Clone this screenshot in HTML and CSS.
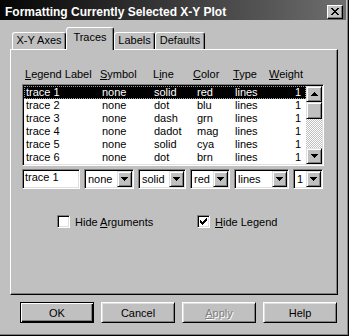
FILE: index.html
```html
<!DOCTYPE html>
<html lang="en">
<head>
  <meta charset="UTF-8">
  <title>Formatting Currently Selected X-Y Plot</title>
  <link rel="stylesheet" href="styles.css">
</head>
<body>
  <div class="window">
    <div class="titlebar">
      <span class="title">Formatting Currently Selected X-Y Plot</span>
      <span class="close">
        <svg width="8" height="7" viewBox="0 0 8 7"><path d="M0 0h2v1H0zM6 0h2v1H6zM1 1h2v1H1zM5 1h2v1H5zM2 2h4v1H2zM3 3h2v1H3zM2 4h4v1H2zM1 5h2v1H1zM5 5h2v1H5zM0 6h2v1H0zM6 6h2v1H6z"/></svg>
      </span>
    </div>

    <div class="tabs">
      <div class="tab tab-axes">X-Y Axes</div>
      <div class="tab tab-traces active">Traces</div>
      <div class="tab tab-labels">Labels</div>
      <div class="tab tab-defaults">Defaults</div>
    </div>

    <div class="panel">
      <div class="headers">
        <span><u>L</u>egend Label</span>
        <span><u>S</u>ymbol</span>
        <span>L<u>i</u>ne</span>
        <span><u>C</u>olor</span>
        <span><u>T</u>ype</span>
        <span><u>W</u>eight</span>
      </div>

      <div class="listbox field">
        <div class="rows">
          <div class="row selected"><span>trace 1</span><span>none</span><span>solid</span><span>red</span><span>lines</span><span class="num">1</span></div>
          <div class="row"><span>trace 2</span><span>none</span><span>dot</span><span>blu</span><span>lines</span><span class="num">1</span></div>
          <div class="row"><span>trace 3</span><span>none</span><span>dash</span><span>grn</span><span>lines</span><span class="num">1</span></div>
          <div class="row"><span>trace 4</span><span>none</span><span>dadot</span><span>mag</span><span>lines</span><span class="num">1</span></div>
          <div class="row"><span>trace 5</span><span>none</span><span>solid</span><span>cya</span><span>lines</span><span class="num">1</span></div>
          <div class="row"><span>trace 6</span><span>none</span><span>dot</span><span>brn</span><span>lines</span><span class="num">1</span></div>
        </div>
        <div class="scrollbar">
          <div class="sb-btn">
            <svg width="7" height="4" viewBox="0 0 7 4"><path d="M3 0h1v1h1v1h1v1h1v1H0V3h1V2h1V1h1z"/></svg>
          </div>
          <div class="thumb"></div>
          <div class="track"></div>
          <div class="sb-btn">
            <svg width="7" height="4" viewBox="0 0 7 4"><path d="M0 0h7v1H6v1H5v1H4v1H3V3H2V2H1V1H0z"/></svg>
          </div>
        </div>
      </div>

      <div class="editrow">
        <div class="field textbox">trace 1</div>
        <div class="field combo w-symbol"><span>none</span><span class="drop"><svg width="7" height="4" viewBox="0 0 7 4"><path d="M0 0h7v1H6v1H5v1H4v1H3V3H2V2H1V1H0z"/></svg></span></div>
        <div class="field combo w-line"><span>solid</span><span class="drop"><svg width="7" height="4" viewBox="0 0 7 4"><path d="M0 0h7v1H6v1H5v1H4v1H3V3H2V2H1V1H0z"/></svg></span></div>
        <div class="field combo w-color"><span>red</span><span class="drop"><svg width="7" height="4" viewBox="0 0 7 4"><path d="M0 0h7v1H6v1H5v1H4v1H3V3H2V2H1V1H0z"/></svg></span></div>
        <div class="field combo w-type"><span>lines</span><span class="drop"><svg width="7" height="4" viewBox="0 0 7 4"><path d="M0 0h7v1H6v1H5v1H4v1H3V3H2V2H1V1H0z"/></svg></span></div>
        <div class="field combo w-weight"><span>1</span><span class="drop"><svg width="7" height="4" viewBox="0 0 7 4"><path d="M0 0h7v1H6v1H5v1H4v1H3V3H2V2H1V1H0z"/></svg></span></div>
      </div>

      <div class="checks">
        <div class="check">
          <span class="field box"></span>
          <span>Hide <u>A</u>rguments</span>
        </div>
        <div class="check">
          <span class="field box">
            <svg width="7" height="7" viewBox="0 0 7 7"><path d="M6 0h1v3H6zM5 1h1v3H5zM4 2h1v3H4zM0 2h1v3H0zM1 3h1v3H1zM3 3h1v3H3zM2 4h1v3H2z"/></svg>
          </span>
          <span><u>H</u>ide Legend</span>
        </div>
      </div>
    </div>

    <div class="buttons">
      <div class="btn default">OK</div>
      <div class="btn">Cancel</div>
      <div class="btn disabled"><u>A</u>pply</div>
      <div class="btn">Help</div>
    </div>
  </div>
</body>
</html>
```

FILE: styles.css
```css
* { box-sizing: border-box; }

body {
  margin: 0;
  background-color: #c0c0c0;
  color: #000;
  font-family: 'Liberation Sans', Arial, sans-serif;
  font-size: 11px;
}

.window {
  width: 349px;
  height: 336px;
  background-color: #c0c0c0;
  border-right: 1px solid #000;
  border-bottom: 1px solid #000;
  box-shadow: inset -1px -1px #808080;
  padding: 0 2px 2px 0;
}

/* Title bar */
.titlebar {
  height: 20px;
  padding: 3px 3px 0 5px;
  display: flex;
  align-items: center;
  background: linear-gradient(to right, #050505, #6e6e6e);
  color: #fff;
  font-weight: bold;
  font-size: 12px;
}

.close {
  margin-left: auto;
  width: 16px;
  height: 14px;
  background-color: #c0c0c0;
  border: 1px solid;
  border-color: #fff #000 #000 #fff;
  box-shadow: inset -1px -1px #808080;
  display: flex;
  align-items: center;
  justify-content: center;
}

/* Tabs */
.tabs {
  display: flex;
  align-items: flex-end;
  height: 22px;
  margin-top: 7px;
  padding-left: 12px;
}

.tab {
  height: 17px;
  padding-top: 1px;
  line-height: 13px;
  text-align: center;
  border: 1px solid;
  border-bottom: none;
  border-color: #fff #000 transparent #fff;
  border-radius: 3px 3px 0 0;
  box-shadow: inset -1px 0 #808080;
}

.tab.active {
  position: relative;
  z-index: 1;
  height: 23px;
  margin-bottom: -1px;
  padding-top: 3px;
  background-color: #c0c0c0;
}

.tab-axes { width: 54px; }
.tab-traces { width: 48px; }
.tab-labels { width: 41px; }
.tab-defaults { width: 50px; }

/* Panel */
.panel {
  margin-left: 10px;
  width: 328px;
  height: 246px;
  border: 1px solid;
  border-color: #fff #000 #000 #fff;
  box-shadow: inset -1px -1px #808080;
  padding: 18px 0 0 11px;
}

.headers {
  display: grid;
  grid-template-columns: 75px 53px 40px 40px 36px auto;
  height: 13px;
  line-height: 13px;
  padding-left: 3px;
  margin-bottom: 3px;
}

.field {
  border: 1px solid;
  border-color: #808080 #fff #fff #808080;
  box-shadow: inset 1px 1px #000, inset -1px -1px #dfdfdf;
  padding: 1px;
  background-color: #fff;
}

.listbox {
  display: flex;
  width: 302px;
  height: 82px;
}

.rows {
  flex: 1;
}

.row {
  display: grid;
  grid-template-columns: 76px 52px 43px 38px 1fr auto;
  height: 13px;
  line-height: 13px;
  padding: 0 5px 0 2px;
}

.row .num {
  text-align: right;
}

.row.selected {
  background-color: #000;
  color: #fff;
  outline: 1px dotted #9a9a9a;
  outline-offset: -1px;
}

.scrollbar {
  width: 16px;
  display: flex;
  flex-direction: column;
}

.sb-btn, .thumb, .drop {
  background-color: #c0c0c0;
  border: 1px solid;
  border-color: #dfdfdf #000 #000 #dfdfdf;
  box-shadow: inset 1px 1px #fff, inset -1px -1px #808080;
}

.sb-btn {
  height: 16px;
  display: flex;
  align-items: center;
  justify-content: center;
}

.thumb {
  height: 17px;
}

.track {
  flex: 1;
  background-image: conic-gradient(#fff 0 25%, #c0c0c0 0 50%, #fff 0 75%, #c0c0c0 0);
  background-size: 2px 2px;
}

/* Edit row */
.editrow {
  display: flex;
  gap: 4px;
  margin-top: 3px;
  height: 20px;
}

.textbox {
  width: 58px;
  padding: 1px 2px;
  line-height: 13px;
}

.combo {
  display: flex;
  align-items: center;
  padding-left: 3px;
  line-height: 16px;
}

.drop {
  margin-left: auto;
  width: 15px;
  height: 16px;
  display: flex;
  align-items: center;
  justify-content: center;
}

.w-symbol { width: 50px; }
.w-line { width: 48px; }
.w-color { width: 40px; }
.w-type { width: 55px; }
.w-weight { width: 30px; }

/* Checkboxes */
.checks {
  display: flex;
  margin-top: 26px;
  padding-left: 35px;
}

.check {
  width: 147px;
  display: flex;
  align-items: center;
  gap: 5px;
}

.box {
  width: 13px;
  height: 13px;
  display: flex;
  align-items: center;
  justify-content: center;
  padding: 0;
}

/* Buttons */
.buttons {
  display: flex;
  gap: 7px;
  margin-top: 7px;
  padding-left: 20px;
}

.btn {
  width: 74px;
  height: 21px;
  display: flex;
  align-items: center;
  justify-content: center;
  border: 1px solid;
  border-color: #fff #000 #000 #fff;
  box-shadow: inset 1px 1px #dfdfdf, inset -1px -1px #808080;
}

.btn.default {
  border-color: #000;
  box-shadow: inset 1px 1px #fff, inset -1px -1px #000, inset -2px -2px #808080;
}

.btn.disabled {
  color: #808080;
  text-shadow: 1px 1px #fff;
}
```
